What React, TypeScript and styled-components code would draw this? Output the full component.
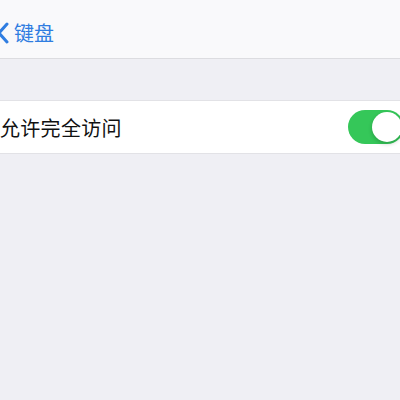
import React from 'react'
import styled, { createGlobalStyle } from 'styled-components'

const GlobalStyle = createGlobalStyle`
  html, body {
    margin: 0;
    padding: 0;
    background: #efeff4;
    overflow: hidden;
  }
  body {
    font-family: "Noto Sans CJK SC", "Noto Sans", sans-serif;
  }
`

export default function App() {
  return (
    <>
      <GlobalStyle />
      <Page>
        <NavBar>
          <BackButton>
            <svg width="12" height="22" viewBox="0 0 12 22">
              <path d="M10 2 L2 11 L10 20" fill="none" stroke="#2f7de1" strokeWidth="3" strokeLinecap="round" strokeLinejoin="round" />
            </svg>
            <BackLabel>键盘</BackLabel>
          </BackButton>
        </NavBar>
        <Group>
          <Row>
            <RowLabel>允许完全访问</RowLabel>
            <Toggle on>
              <Knob />
            </Toggle>
          </Row>
        </Group>
      </Page>
    </>
  )
}

const Page = styled.div`
  width: 404px;
  height: 400px;
  background: #efeff4;
`

const NavBar = styled.div`
  height: 59px;
  background: #f9f9fb;
  border-bottom: 1px solid #dcdce0;
  display: flex;
  align-items: center;
  padding-top: 8px;
  box-sizing: border-box;
`

const BackButton = styled.div`
  display: flex;
  align-items: center;
  gap: 5px;
  margin-left: -3px;
`

const BackLabel = styled.span`
  color: #2f7de1;
  font-size: 20px;
  line-height: 24px;
`

const Group = styled.div`
  margin-top: 41px;
  background: #ffffff;
  border-top: 1px solid #e2e2e6;
  border-bottom: 1px solid #e2e2e6;
`

const Row = styled.div`
  height: 52px;
  display: flex;
  align-items: center;
  justify-content: space-between;
`

const RowLabel = styled.span`
  font-size: 20px;
  color: #111111;
  letter-spacing: 0.3px;
`

const Toggle = styled.div<{ on?: boolean }>`
  width: 56px;
  height: 34px;
  border-radius: 17px;
  background: ${(p) => (p.on ? '#35c759' : '#e9e9eb')};
  position: relative;
  margin-right: 0;
`

const Knob = styled.div`
  position: absolute;
  top: 2px;
  right: 2px;
  width: 30px;
  height: 30px;
  border-radius: 50%;
  background: #ffffff;
  box-shadow: 0 2px 4px rgba(0, 0, 0, 0.2);
`
